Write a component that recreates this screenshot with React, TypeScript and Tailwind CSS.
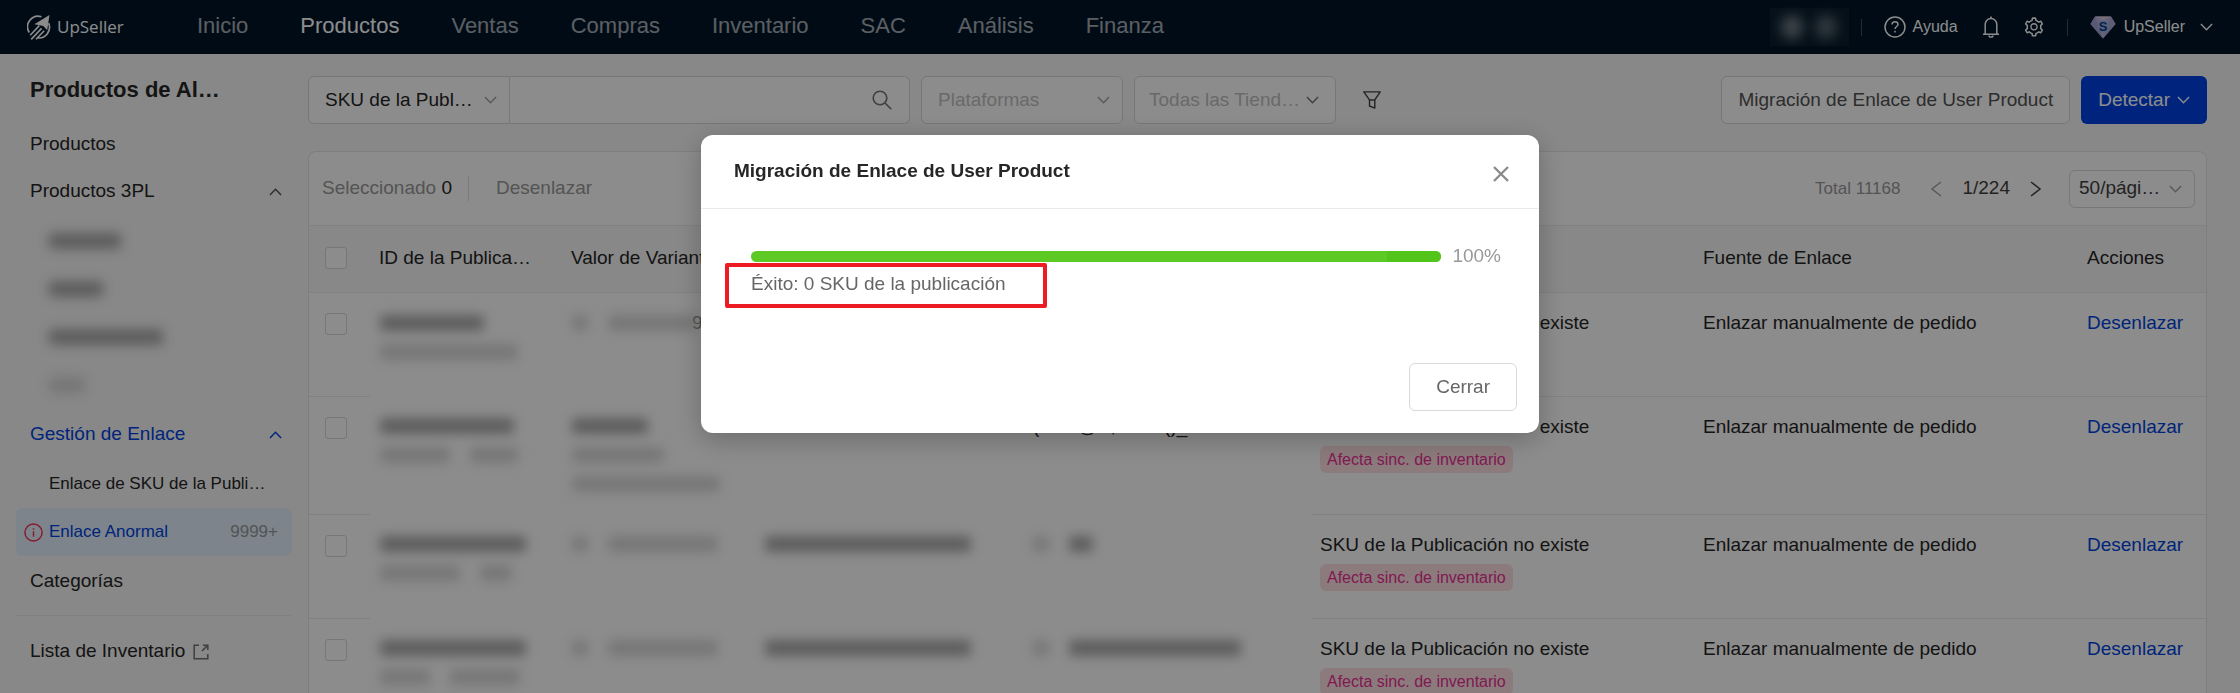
import { useState } from "react";
import type { ReactNode } from "react";
import { AiOutlineSetting } from "react-icons/ai";

const navItems = ["Inicio", "Productos", "Ventas", "Compras", "Inventario", "SAC", "Análisis", "Finanza"];

const rows = [
  {
    height: "h-[104px]",
    id: [["w-[104px] bg-neutral-400"], ["w-[138px] bg-neutral-300"]],
    variant: [["w-4 bg-neutral-300", "w-[90px] bg-neutral-300"]],
    sku: [],
    product: null,
  },
  {
    height: "h-[118px]",
    id: [["w-[134px] bg-neutral-400"], ["w-[70px] bg-neutral-300", "w-12 bg-neutral-300"]],
    variant: [["w-[76px] bg-neutral-400"], ["w-[92px] bg-neutral-300"], ["w-[148px] bg-neutral-300"]],
    sku: [],
    product: "(~~~!@#$%^&*()_",
  },
  {
    height: "h-[104px]",
    id: [["w-[146px] bg-neutral-400"], ["w-20 bg-neutral-300", "w-8 bg-neutral-300"]],
    variant: [["w-4 bg-neutral-300", "w-[110px] bg-neutral-300"]],
    sku: [["w-[206px] bg-neutral-400"]],
    product: [["w-4 bg-neutral-300", "w-6 bg-neutral-400"]],
  },
  {
    height: "h-[118px]",
    id: [["w-[146px] bg-neutral-400"], ["w-[50px] bg-neutral-300", "w-[70px] bg-neutral-300"]],
    variant: [["w-4 bg-neutral-300", "w-[110px] bg-neutral-300"]],
    sku: [["w-[206px] bg-neutral-400"]],
    product: [["w-4 bg-neutral-300", "w-[172px] bg-neutral-400"]],
  },
];

function Chevron({ className = "" }: { className?: string }) {
  return (
    <svg viewBox="0 0 14 8" className={`w-[13px] h-2 shrink-0 pointer-events-none ${className}`} fill="none" stroke="currentColor" strokeWidth="1.5">
      <path d="M1 0.8 7 7 13 0.8" />
    </svg>
  );
}

function Logo() {
  return (
    <a href="#" className="flex items-center gap-[6px] w-[170px] text-white">
      <svg viewBox="0 0 24 25" className="w-6 h-[25px]" fill="none" stroke="currentColor">
        <path d="M14.5 1.8A10.6 10.6 0 0 0 2.2 17.5" strokeWidth="1.7" />
        <path d="M21.6 8.2A10.6 10.6 0 0 1 10.6 22.9" strokeWidth="1.7" />
        <path d="M22.5 0 20.2 15.2 16.3 10.9 7.4 9.2Z" fill="currentColor" stroke="none" />
        <path d="M12.3 10.6 3.2 20.2M14.6 13.4 4.2 24.4M17.2 15.8 9 24.2" strokeWidth="1.6" />
      </svg>
      <span className="font-['Open_Sans',sans-serif] text-[17px]">UpSeller</span>
    </a>
  );
}

function Header() {
  return (
    <header className="flex items-center h-[54px] bg-[#001529] pl-[27px] pr-[27px] shrink-0">
      <Logo />
      <nav className="flex gap-[52px] text-[22px] leading-[32px] pb-[2px] text-white/65">
        {navItems.map((item) => (
          <a key={item} href="#" className={item === "Productos" ? "text-white" : ""}>{item}</a>
        ))}
      </nav>
      <div className="flex items-center ml-auto text-base text-white">
        <div className="flex items-center justify-center gap-3 w-[79px] h-[38px] bg-[#0a1f2f]">
          <span className="w-[22px] h-6 rounded-full bg-white/40 blur-[6px]" />
          <span className="w-[22px] h-6 rounded-full bg-white/30 blur-[6px]" />
        </div>
        <span className="w-px h-[17px] ml-3 mr-[22px] bg-white/25" />
        <a href="#" className="flex items-center gap-[7px]">
          <svg viewBox="0 0 22 22" className="w-[22px] h-[22px]" fill="none" stroke="currentColor" strokeWidth="1.5">
            <circle cx="11" cy="11" r="10" />
            <path d="M8 8.6C8 6.7 9.3 5.7 11 5.7s3 1 3 2.7c0 2-3 2.2-3 4.6" />
            <path d="M11 14.8v1.8" />
          </svg>
          Ayuda
        </a>
        <button aria-label="Notificaciones" className="ml-[25px]">
          <svg viewBox="0 0 16 22" className="w-4 h-[22px]" fill="none" stroke="currentColor" strokeWidth="1.5">
            <path d="M2.2 18V8.4a5.8 5.8 0 0 1 11.6 0V18" />
            <path d="M0 18.2h16M8 0.6v2" />
            <path d="M6 19.5a2 1.6 0 0 0 4 0" />
          </svg>
        </button>
        <button aria-label="Ajustes" className="ml-6"><AiOutlineSetting size={22} /></button>
        <span className="w-px h-[17px] mx-[22px] bg-white/25" />
        <button className="flex items-center gap-2">
          <svg viewBox="0 0 26 23" className="w-[26px] h-[23px]">
            <path d="M5 0.5h16L25.5 8 13 22.5 0.5 8Z" fill="#b9b6e0" />
            <path d="M5 0.5h16L13 4Z" fill="#d9c9dd" />
            <path d="M0.5 8 5 0.5 8 8 13 22.5Z" fill="#a3a2d3" />
            <path d="M25.5 8 21 0.5 18 8 13 22.5Z" fill="#aeaad8" />
            <circle cx="13" cy="10.5" r="6" fill="#9fb0dc" />
            <text x="13" y="15" textAnchor="middle" fontSize="13" fontWeight="700" fontFamily="Liberation Sans, sans-serif" fill="#123a8c">S</text>
          </svg>
          UpSeller
          <Chevron className="ml-[7px]" />
        </button>
      </div>
    </header>
  );
}

function Blur({ lines }: { lines: string[][] }) {
  return (
    <div>
      {lines.map((line, i) => (
        <div key={i} className="flex items-center gap-5 h-[29px]">
          {line.map((c, j) => <span key={j} className={`h-4 rounded-sm blur-[6px] opacity-90 ${c}`} />)}
        </div>
      ))}
    </div>
  );
}

function Sidebar() {
  const stores = ["w-[72px] bg-neutral-400", "w-[54px] bg-neutral-400", "w-[114px] bg-neutral-400", "w-9 bg-neutral-300"];
  return (
    <aside className="w-[308px] shrink-0 pl-4 pr-4 pt-[11px]">
      <h1 className="flex items-center h-12 pl-[14px] mb-2 text-[22px] font-bold">Productos de Al…</h1>
      <a href="#" className="flex items-center h-[47px] pl-[14px]">Productos</a>
      <button className="flex items-center justify-between w-full h-[47px] pl-[14px] pr-[10px]">
        Productos 3PL <Chevron className="rotate-180 text-neutral-600" />
      </button>
      <ul className="py-[2px]">
        {stores.map((s) => (
          <li key={s} className="flex items-center h-12 pl-[33px]">
            <span className={`h-4 rounded-sm blur-[6px] opacity-90 ${s}`} />
          </li>
        ))}
      </ul>
      <button className="flex items-center justify-between w-full h-[47px] pl-[14px] pr-[10px] text-[#0042e0]">
        Gestión de Enlace <Chevron className="rotate-180" />
      </button>
      <ul className="py-[2px] text-[17px]">
        <li><a href="#" className="flex items-center h-12 pl-[33px]">Enlace de SKU de la Publi…</a></li>
        <li>
          <a href="#" className="flex items-center h-12 pl-2 pr-[14px] rounded-md bg-[#e3f1ff] text-[#0042e0]">
            <svg viewBox="0 0 20 20" className="w-[19px] h-[19px] mr-[6px] text-[#f5304f]" fill="none" stroke="currentColor" strokeWidth="1.5">
              <circle cx="10" cy="10" r="9" />
              <path d="M10 8.6v6M10 5.4v1.6" />
            </svg>
            Enlace Anormal
            <span className="ml-auto text-[#999]">9999+</span>
          </a>
        </li>
      </ul>
      <a href="#" className="flex items-center h-[47px] pl-[14px]">Categorías</a>
      <hr className="mt-[10px] mb-3 border-[#ebebeb]" />
      <a href="#" className="flex items-center gap-2 h-[47px] pl-[14px]">
        Lista de Inventario
        <svg viewBox="0 0 16 16" className="w-4 h-4 text-neutral-500" fill="none" stroke="currentColor" strokeWidth="1.5">
          <path d="M6 1.2H1.2v13.6h13.6V10M10 1.2h4.8V6M14.6 1.4 9 7" />
        </svg>
      </a>
    </aside>
  );
}

function Select({ label, text, box, field, arrow }: { label: string; text: string; box: string; field: string; arrow: string }) {
  return (
    <div className={`relative flex items-center border-[#d9d9d9] bg-white ${box}`}>
      <select aria-label={label} className={`w-full h-full appearance-none bg-transparent ${field}`}>
        <option>{text}</option>
      </select>
      <Chevron className={`absolute ${arrow}`} />
    </div>
  );
}

function Toolbar() {
  return (
    <div className="flex h-12">
      <Select label="Buscar por" text="SKU de la Publ…" box="w-[202px] border rounded-l-md" field="pl-4" arrow="right-3 text-neutral-400" />
      <div className="flex items-center w-[400px] border border-l-0 border-[#d9d9d9] rounded-r-md bg-white pr-[17px]">
        <input aria-label="Buscar" className="w-full h-full px-3 outline-none" />
        <svg viewBox="0 0 20 20" className="w-5 h-5 shrink-0 text-neutral-500" fill="none" stroke="currentColor" strokeWidth="1.6">
          <circle cx="8" cy="8" r="6.8" />
          <path d="m13 13 6.3 6.3" />
        </svg>
      </div>
      <Select label="Plataformas" text="Plataformas" box="w-[202px] ml-[11px] border rounded-md text-[#bfbfbf]" field="pl-4" arrow="right-3 text-neutral-400" />
      <Select label="Tiendas" text="Todas las Tiend…" box="w-[202px] ml-[11px] border rounded-md text-[#bfbfbf]" field="pl-[14px]" arrow="right-4 text-neutral-500" />
      <button aria-label="Filtros" className="ml-[27px] text-neutral-700">
        <svg viewBox="0 0 18 18" className="w-[18px] h-[18px]" fill="none" stroke="currentColor" strokeWidth="1.4">
          <path d="M0.8 0.9h16.4l-5.4 8v8.2L6.5 15V8.9Z" strokeLinejoin="round" />
          <path d="M6.5 9h5.3" />
        </svg>
      </button>
      <button className="ml-auto px-4 border border-[#d9d9d9] rounded-md bg-white text-neutral-600">
        Migración de Enlace de User Product
      </button>
      <button className="flex items-center gap-[7px] ml-[11px] px-[17px] rounded-md bg-[#0042e6] text-white">
        Detectar <Chevron />
      </button>
    </div>
  );
}

function Check({ label }: { label: string }) {
  return <input type="checkbox" aria-label={label} className="block appearance-none w-[22px] h-[22px] border border-[#d9d9d9] rounded-[3px] bg-white" />;
}

function Th({ children, className = "pl-[9px]" }: { children?: ReactNode; className?: string }) {
  return <th className={`pb-[2px] text-left font-normal whitespace-nowrap border-b border-[#ebebeb] ${className}`}>{children}</th>;
}

function Listado() {
  return (
    <section className="mt-[27px] border border-[#e6e6e6] rounded-lg bg-white overflow-hidden">
      <div className="flex items-center h-[73px] pl-[13px] pr-[11px] text-[#999]">
        <span>Seleccionado <span className="text-neutral-800">0</span></span>
        <span className="w-px h-[25px] ml-4 mr-[27px] bg-[#e0e0e0]" />
        <button>Desenlazar</button>
        <span className="ml-auto text-[17px]">Total 11168</span>
        <button aria-label="Anterior" className="ml-[30px] text-neutral-400">
          <svg viewBox="0 0 12 16" className="w-3 h-4" fill="none" stroke="currentColor" strokeWidth="1.5"><path d="M11 1 2 8l9 7" /></svg>
        </button>
        <span className="mx-5 text-neutral-700">1/224</span>
        <button aria-label="Siguiente" className="text-neutral-700">
          <svg viewBox="0 0 12 16" className="w-3 h-4" fill="none" stroke="currentColor" strokeWidth="1.5"><path d="m1 1 9 7-9 7" /></svg>
        </button>
        <Select label="Filas por página" text="50/pági…" box="w-[126px] h-[38px] ml-[27px] border rounded-md text-neutral-700" field="pl-[9px]" arrow="right-3 text-neutral-400" />
      </div>
      <table className="table-fixed w-full">
        <colgroup>
          <col className="w-[61px]" />
          <col className="w-[192px]" />
          <col className="w-[191px]" />
          <col className="w-[271px]" />
          <col className="w-[287px]" />
          <col className="w-[383px]" />
          <col className="w-[384px]" />
          <col className="w-[128px]" />
        </colgroup>
        <thead>
          <tr className="h-[67px] bg-[#f7f7f7] border-t border-[#ebebeb]">
            <Th className="pl-4"><Check label="Seleccionar todo" /></Th>
            <Th>ID de la Publica…</Th>
            <Th>Valor de Variante</Th>
            <Th />
            <Th />
            <Th />
            <Th>Fuente de Enlace</Th>
            <Th>Acciones</Th>
          </tr>
        </thead>
        <tbody>
          {rows.map((row, i) => (
            <tr key={i} className={`align-top leading-[30px] ${row.height}`}>
              <td className="pl-4 pt-5 border-b border-[#ebebeb]"><Check label={`Seleccionar fila ${i + 1}`} /></td>
              <td className="pl-[10px] pt-[15px]"><Blur lines={row.id} /></td>
              <td className="pl-[10px] pt-[15px]">
                <div className="flex">
                  <Blur lines={row.variant} />
                  {i === 0 && <span className="-ml-[6px] text-neutral-500">99</span>}
                </div>
              </td>
              <td className="pl-[12px] pt-[15px]"><Blur lines={row.sku} /></td>
              <td className="pl-[9px] pt-[15px]">
                {typeof row.product === "string" ? row.product : row.product && <Blur lines={row.product} />}
              </td>
              <td className="pl-[9px] pt-[15px] border-b border-[#ebebeb]">
                SKU de la Publicación no existe
                <span className="block w-fit h-[27px] mt-1 px-[7px] rounded-md bg-[#ffe0e3] text-base leading-[27px] text-[#eb2f96]">
                  Afecta sinc. de inventario
                </span>
              </td>
              <td className="pl-[9px] pt-[15px] border-b border-[#ebebeb]">Enlazar manualmente de pedido</td>
              <td className="pl-[9px] pt-[15px] border-b border-[#ebebeb]"><button className="text-[#0042e0]">Desenlazar</button></td>
            </tr>
          ))}
        </tbody>
      </table>
    </section>
  );
}

function Modal({ onClose }: { onClose: () => void }) {
  return (
    <div className="fixed inset-0 z-20 flex items-start justify-center pt-[135px] bg-black/45">
      <div role="dialog" aria-label="Migración de Enlace de User Product" className="w-[838px] max-w-full rounded-xl bg-white shadow-[0_6px_28px_rgba(0,0,0,0.25)]">
        <div className="flex items-center justify-between h-[74px] pl-[33px] pr-[30px] border-b border-[#ebebeb]">
          <h2 className="font-bold">Migración de Enlace de User Product</h2>
          <button aria-label="Cerrar ventana" onClick={onClose} className="pt-1 text-[#8c8c8c]">
            <svg viewBox="0 0 16 16" className="w-4 h-4" fill="none" stroke="currentColor" strokeWidth="2.4"><path d="m1 1 14 14M15 1 1 15" /></svg>
          </button>
        </div>
        <div className="h-[154px] pt-[34px] pl-[50px] pr-[38px]">
          <div className="flex items-center gap-[11px] h-[27px] text-[#999]">
            <div className="flex-1 flex justify-end h-[11px] rounded-full overflow-hidden bg-[#5dc925]">
              <div className="w-[54px] h-full bg-[#52c41a]" />
            </div>
            100%
          </div>
          <div className="relative w-fit leading-[27px] text-[#666]">
            Éxito: 0 SKU de la publicación
            <div className="absolute -top-[7px] -left-[26px] -right-[41px] h-[45px] border-4 border-[#ed1c24] rounded-xs" />
          </div>
        </div>
        <div className="flex justify-end px-[22px] pb-[22px]">
          <button onClick={onClose} className="h-12 px-[26px] border border-[#d9d9d9] rounded-md text-[#666]">Cerrar</button>
        </div>
      </div>
    </div>
  );
}

export default function App() {
  const [modalOpen, setModalOpen] = useState(true);

  return (
    <div className="flex flex-col h-screen overflow-hidden bg-[#f7f7f7] font-['Liberation_Sans',Arial,sans-serif] text-[19px] text-[#262626]">
      <Header />
      <div className="flex">
        <Sidebar />
        <main className="flex-1 min-w-0 pt-[22px] pr-[33px]">
          <Toolbar />
          <Listado />
        </main>
      </div>
      {modalOpen && <Modal onClose={() => setModalOpen(false)} />}
    </div>
  );
}
